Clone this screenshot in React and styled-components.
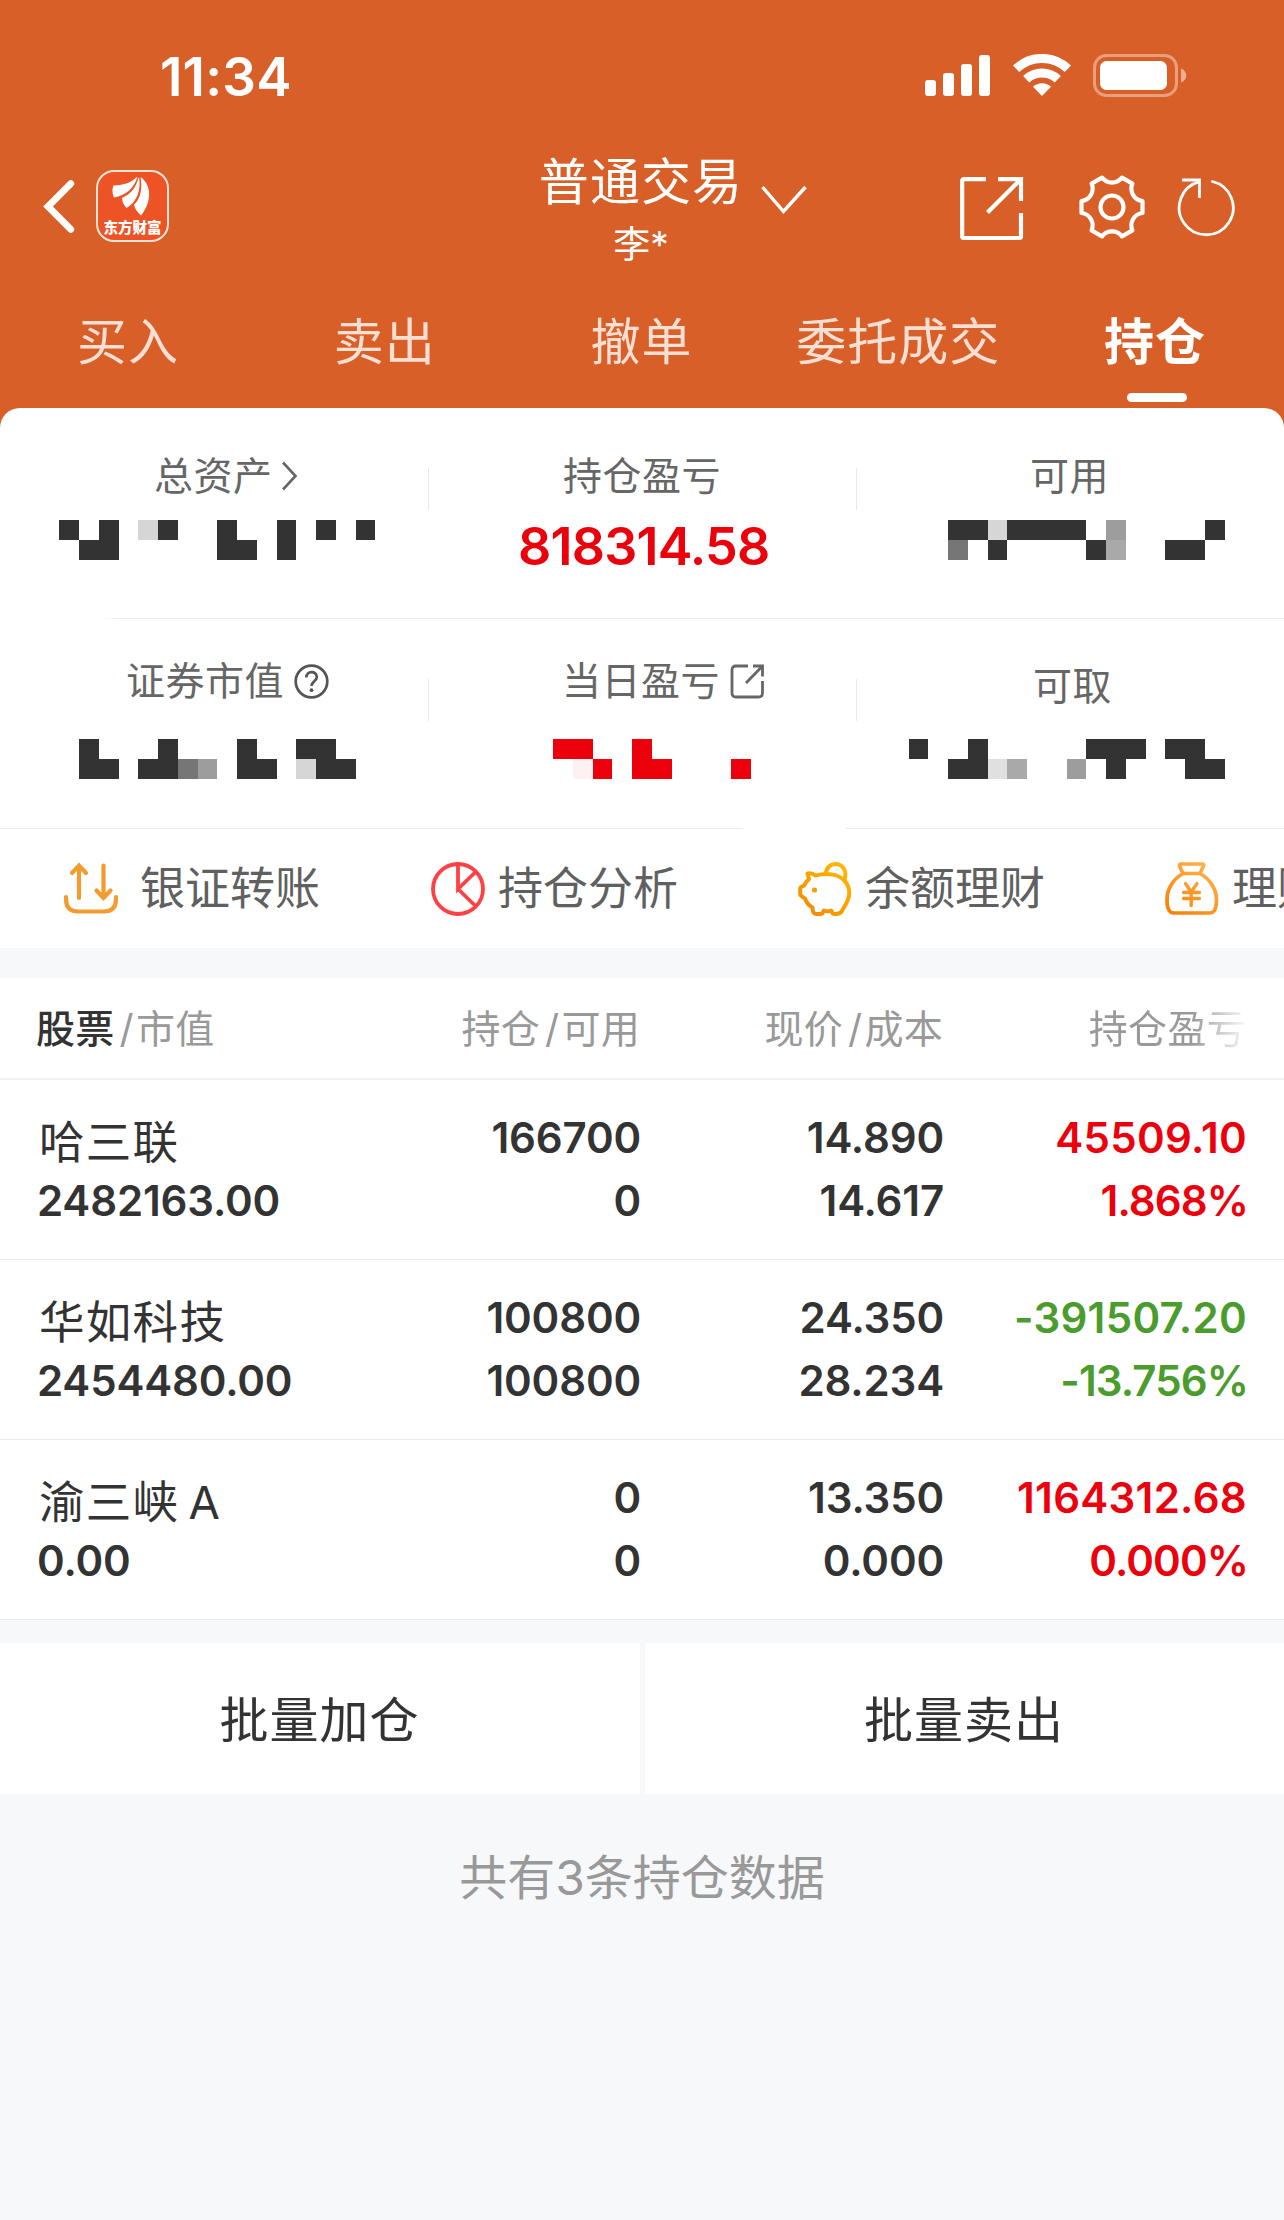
import styled, { createGlobalStyle, css } from "styled-components";

const GlobalStyle = createGlobalStyle`
  * {
    box-sizing: border-box;
  }

  body {
    margin: 0;
    background: #f7f8fa;
    font-family: Inter, "Noto Sans CJK SC", sans-serif;
    color: #333333;
  }
`;

const Screen = styled.div`
  width: 1284px;
  height: 2220px;
  overflow: hidden;
  background: #f7f8fa;
`;

/* header */

const Header = styled.header`
  height: 448px;
  background: #d85f27;
  color: #ffffff;
`;

const StatusBar = styled.div`
  display: flex;
  justify-content: space-between;
  height: 150px;
  padding: 54px 96px 0 160px;
`;

const Clock = styled.div`
  height: 46px;
  font-size: 53px;
  line-height: 46px;
  font-weight: 600;
  letter-spacing: 0.2px;
`;

const StatusIcons = styled.div`
  display: flex;
  align-items: flex-start;
  gap: 22px;
`;

const NavBar = styled.div`
  display: grid;
  grid-template-columns: 541px 1fr 324px;
  height: 140px;
`;

const NavLeft = styled.div`
  display: flex;
  align-items: flex-start;
  gap: 20px;
  padding: 20px 0 0 42px;
`;

const BackIcon = styled.svg`
  margin-top: 8px;
`;

const AppBadge = styled.div`
  display: flex;
  flex-direction: column;
  align-items: center;
  width: 73px;
  height: 72px;
  border: 2px solid #fbe3d8;
  border-radius: 18px;
  background: #ee5326;
`;

const AppBadgeName = styled.div`
  font-size: 14.5px;
  line-height: 14px;
  font-weight: 900;
  white-space: nowrap;
`;

const NavCenter = styled.div`
  display: flex;
  gap: 20px;
`;

const Account = styled.div`
  display: flex;
  flex-direction: column;
  align-items: center;
  width: 200px;
`;

const AccountType = styled.div`
  margin-top: 6px;
  font-size: 50px;
  line-height: 52px;
  letter-spacing: 1.1px;
  white-space: nowrap;
`;

const AccountName = styled.div`
  margin-top: 18px;
  font-size: 37px;
  line-height: 38px;
`;

const ChevronDown = styled.svg`
  margin-top: 34px;
`;

const NavRight = styled.div`
  display: flex;
  align-items: flex-start;
  padding-top: 24px;
`;

const SettingsIcon = styled.svg`
  margin-left: 52px;
`;

const RefreshIcon = styled.svg`
  margin-left: 31px;
`;

const Tabs = styled.nav`
  display: grid;
  grid-template-columns: repeat(5, 1fr);
`;

const Tab = styled.div`
  display: flex;
  flex-direction: column;
  align-items: center;
  font-size: 50px;
  line-height: 52px;
  letter-spacing: 1px;
  padding: 26px 1px 0 0;
  color: rgba(255, 255, 255, 0.8);
  white-space: nowrap;

  ${({ $active }) =>
    $active &&
    css`
      color: #ffffff;
      font-weight: 600;

      &::after {
        content: "";
        width: 60px;
        height: 9px;
        margin: 25px 0 0 3px;
        border-radius: 5px;
        background: #ffffff;
      }
    `}
`;

/* asset summary */

const Summary = styled.section`
  margin-top: -40px;
  height: 540px;
  border-radius: 20px 20px 0 0;
  background: #ffffff;
`;

const SummaryRow = styled.div`
  display: grid;
  grid-template-columns: repeat(3, 1fr);
  height: ${({ $height }) => $height}px;
`;

const SummaryCell = styled.div`
  position: relative;
  padding-top: ${({ $top }) => $top}px;

  &:not(:first-child)::before {
    content: "";
    position: absolute;
    left: 0;
    top: 60px;
    width: 1px;
    height: 42px;
    background: #e8e8e8;
  }
`;

const Label = styled.div`
  display: flex;
  align-items: center;
  height: 40px;
  padding-left: ${({ $left }) => $left}px;
  font-size: 39px;
  line-height: 40px;
  letter-spacing: 0.5px;
  color: #666666;
  white-space: nowrap;

  svg {
    margin-left: ${({ $gap }) => $gap || 10}px;
  }
`;

const ProfitTotal = styled.div`
  margin-top: 25px;
  padding-left: 90px;
  font-size: 52px;
  line-height: 52px;
  font-weight: 600;
  letter-spacing: -0.8px;
  color: #ec000c;
`;

const Mosaic = styled.div`
  display: grid;
  grid-template-columns: repeat(${({ $columns }) => $columns}, 19.754px);
  grid-auto-rows: 20px;
  margin: ${({ $top }) => $top}px 0 0 ${({ $left }) => $left}px;
`;

const Tile = styled.span`
  background: ${({ $color }) => $color};
`;

const Divider = styled.div`
  height: 1px;
  background: ${({ $fill }) => $fill || "#ebebeb"};
`;

const Shortcuts = styled.div`
  display: flex;
  height: 119px;
  overflow: hidden;
`;

const Shortcut = styled.div`
  display: flex;
  align-items: center;
  flex: 0 0 367px;
  gap: ${({ $gap }) => $gap || 13}px;
  padding-left: 64px;
  font-size: 45px;
  line-height: 50px;
  color: #606060;
  white-space: nowrap;
`;

/* positions table */

const Table = styled.section`
  margin-top: 30px;
  background: #ffffff;
`;

const HeadRow = styled.div`
  display: grid;
  grid-template-columns: 341px 263px 303px 303px;
  align-items: center;
  height: 102px;
  padding: 2px 0 0 36px;
  border-bottom: 2px solid #f1f1f1;
  font-size: 39px;
  line-height: 50px;
  color: #999999;
`;

const Head = styled.div`
  letter-spacing: 0.3px;
  text-align: ${({ $align }) => $align || "right"};
  white-space: nowrap;

  b {
    font-weight: 500;
    color: #333333;
  }

  i {
    margin: 0 2px 0 5px;
    font-style: normal;
  }
`;

const FadedHead = styled(Head)`
  background: linear-gradient(90deg, #999999 82%, #eeeeee 98%);
  background-clip: text;
  -webkit-background-clip: text;
  color: transparent;
`;

const Position = styled.div`
  display: grid;
  grid-template-columns: 341px 263px 303px 303px;
  grid-template-rows: 63px 63px;
  height: 180px;
  padding: 26px 0 0 37px;
  border-bottom: 1px solid #e9e9e9;
  font-size: 42px;
  line-height: 63px;
  font-weight: 600;
`;

const StockName = styled.div`
  padding: 5px 0 0 2px;
  font-size: 45.5px;
  font-weight: 400;
  letter-spacing: 1.3px;
  word-spacing: -5px;
  white-space: nowrap;
`;

const Amount = styled.div`
  text-align: ${({ $align }) => $align || "right"};
  letter-spacing: -0.15px;
  white-space: nowrap;
`;

const Profit = styled(Amount)`
  letter-spacing: 0.3px;
  color: ${({ $color }) => $color};
`;

const Rate = styled(Profit)`
  margin-right: -1px;
  letter-spacing: -0.9px;
`;

/* footer */

const BatchActions = styled.div`
  display: grid;
  grid-template-columns: 640px 639px;
  gap: 5px;
  margin-top: 23px;
`;

const BatchButton = styled.button`
  height: 151px;
  padding: 0 1px 4px 0;
  border: 0;
  background: #ffffff;
  font: inherit;
  font-size: 49px;
  letter-spacing: 1px;
  color: #333333;
`;

const CountNote = styled.p`
  margin: 58px 0 0;
  font-size: 48px;
  line-height: 52px;
  text-align: center;
  color: #999999;
`;

const RED = "#ec000c";
const GREEN = "#4a9c2d";

const SHADES = {
  ".": "transparent",
  "#": "#333333",
  r: RED,
  p: "#fdf1f4",
  q: "#e0e0e0",
  l: "#d6d6d6",
  o: "#a9a9a9",
  n: "#9d9d9d",
  m: "#767676",
};

const positions = [
  {
    name: "哈三联",
    value: "2482163.00",
    held: "166700",
    usable: "0",
    price: "14.890",
    cost: "14.617",
    profit: "45509.10",
    rate: "1.868%",
    color: RED,
  },
  {
    name: "华如科技",
    value: "2454480.00",
    held: "100800",
    usable: "100800",
    price: "24.350",
    cost: "28.234",
    profit: "-391507.20",
    rate: "-13.756%",
    color: GREEN,
  },
  {
    name: "渝三峡 A",
    value: "0.00",
    held: "0",
    usable: "0",
    price: "13.350",
    cost: "0.000",
    profit: "1164312.68",
    rate: "0.000%",
    color: RED,
  },
];

const HiddenValue = ({ rows, left, top }) => (
  <Mosaic $columns={rows[0].length} $left={left} $top={top}>
    {rows
      .join("")
      .split("")
      .map((shade, i) => (
        <Tile key={i} $color={SHADES[shade]} />
      ))}
  </Mosaic>
);

const PhoneStatus = () => (
  <StatusBar>
    <Clock>11:34</Clock>
    <StatusIcons>
      <svg width="66" height="43" viewBox="0 0 66 43" fill="#fff">
        <rect x="0" y="26" width="11" height="16" rx="3" />
        <rect x="18" y="19" width="11" height="23" rx="3" />
        <rect x="36" y="10" width="11" height="32" rx="3" />
        <rect x="54" y="1" width="11" height="41" rx="3" />
      </svg>
      <svg width="58" height="43" viewBox="0 0 58 43" fill="none" stroke="#fff" strokeWidth="9">
        <path d="M3.1 14.8A37.5 37.5 0 0 1 54.9 14.8" />
        <path d="M13.2 25.3A23 23 0 0 1 44.8 25.3" />
        <path d="M29 42L20 32.8A13 13 0 0 1 38 32.8Z" fill="#fff" stroke="none" />
      </svg>
      <svg width="95" height="43" viewBox="0 0 95 43">
        <rect x="1.5" y="1.5" width="82" height="40" rx="12" fill="none" stroke="#fff" strokeOpacity="0.4" strokeWidth="3" />
        <rect x="7" y="7" width="67" height="29" rx="6.5" fill="#fff" />
        <path d="M88 14.5C95 17 95 26 88 28.5Z" fill="#fff" fillOpacity="0.5" />
      </svg>
    </StatusIcons>
  </StatusBar>
);

const AppLogo = () => (
  <AppBadge>
    <svg width="69" height="49" viewBox="2 2 69 49" fill="#fff">
      <path d="M40.5 7C35 13.5 26 15 17.5 15.5C16 19 16 23 18 27.5C30 25.5 38 18 41.5 7Z" />
      <path d="M42.3 8C40.5 17 35 24 26 28C26 32 28 35 30.5 38C41 32 45 20 43.2 8Z" />
      <path d="M44.5 7C46.5 17 45 29 38 34.5C38.5 38 41 42 45 45.5C56 32 56 15 44.5 7Z" />
    </svg>
    <AppBadgeName>东方财富</AppBadgeName>
  </AppBadge>
);

const Nav = () => (
  <NavBar>
    <NavLeft>
      <BackIcon width="34" height="58" viewBox="0 0 34 58" fill="none" stroke="#fff" strokeWidth="6.8" strokeLinecap="round">
        <path d="M28.8 5.7L6 28.5L28.8 51.3" />
      </BackIcon>
      <AppLogo />
    </NavLeft>
    <NavCenter>
      <Account>
        <AccountType>普通交易</AccountType>
        <AccountName>李*</AccountName>
      </Account>
      <ChevronDown width="46" height="32" viewBox="0 0 46 32" fill="none" stroke="#fff" strokeWidth="3.4">
        <path d="M1.5 3L22.5 27.5L44.5 3" />
      </ChevronDown>
    </NavCenter>
    <NavRight>
      <svg width="66" height="68" viewBox="0 0 66 68" fill="none" stroke="#fff" strokeWidth="4.2">
        <path d="M26 5.2H4Q2.2 5.2 2.2 7V62.5Q2.2 64 4 64H59Q61 64 61 62.5V39" />
        <path d="M38 5.2H61V27" />
        <path d="M61 5L27.5 38.5" />
      </svg>
      <SettingsIcon width="68" height="68" viewBox="-34 -33 68 68" fill="none" stroke="#fff" strokeWidth="4.2" strokeLinejoin="round">
        <path d="M30.5 -6V6A12.5 12.5 0 0 0 20.4 23.4L10 29.4A12.5 12.5 0 0 0 -10 29.4L-20.4 23.4A12.5 12.5 0 0 0 -30.5 6V-6A12.5 12.5 0 0 0 -20.4 -23.4L-10 -29.4A12.5 12.5 0 0 0 10 -29.4L20.4 -23.4A12.5 12.5 0 0 0 30.5 -6Z" />
        <circle r="11.5" />
      </SettingsIcon>
      <RefreshIcon width="60" height="68" viewBox="0 0 60 68" fill="none" stroke="#fff" strokeWidth="2.8">
        <path d="M35.5 7.5A27 27 0 1 1 22.5 7.6" strokeLinecap="round" />
        <path d="M5 6H22.5V24" />
      </RefreshIcon>
    </NavRight>
  </NavBar>
);

const AssetSummary = () => (
  <Summary>
    <SummaryRow $height={210}>
      <SummaryCell $top={48}>
        <Label $left={154} $gap={8}>
          总资产
          <svg width="17" height="30" viewBox="0 0 17 30" fill="none" stroke="#666" strokeWidth="2.6">
            <path d="M2 1.5L14.5 15L2 28.5" />
          </svg>
        </Label>
        <HiddenValue left={59.26} top={24} rows={["#.#.l#..#..#.#.#", ".##.....##.#...."]} />
      </SummaryCell>
      <SummaryCell $top={48}>
        <Label $left={135}>持仓盈亏</Label>
        <ProfitTotal>818314.58</ProfitTotal>
      </SummaryCell>
      <SummaryCell $top={48}>
        <Label $left={174}>可用</Label>
        <HiddenValue left={92.2} top={24} rows={["##l####.n....#", "m.#....#o..##."]} />
      </SummaryCell>
    </SummaryRow>
    <Divider $fill="linear-gradient(90deg, transparent 102px, #ebebeb 120px)" />
    <SummaryRow $height={209}>
      <SummaryCell $top={42}>
        <Label $left={126}>
          证券市值
          <svg width="35" height="35" viewBox="0 0 35 35" fill="none" stroke="#555" strokeWidth="2.7">
            <circle cx="17.5" cy="17.5" r="15.8" />
            <path d="M12.3 13.5C12.3 6.5 22.8 6.5 22.8 13C22.8 17.2 17.5 17.3 17.5 22" />
            <circle cx="17.5" cy="26.2" r="1.9" fill="#555" stroke="none" />
          </svg>
        </Label>
        <HiddenValue left={79.01} top={38} rows={["#...#...#..##.", "##.##mn.##.l##"]} />
      </SummaryCell>
      <SummaryCell $top={42}>
        <Label $left={134} $gap={10}>
          当日盈亏
          <svg width="35" height="35" viewBox="0 0 35 35" fill="none" stroke="#666" strokeWidth="2.8">
            <path d="M18 2H6Q2 2 2 6V29Q2 33 6 33H28.5Q32.5 33 32.5 29V17" />
            <path d="M23 2H32.5V12.5" />
            <path d="M32 2.5L16 19" />
          </svg>
        </Label>
        <HiddenValue left={125.1} top={38} rows={["rr..r.....", ".pr.rr...r"]} />
      </SummaryCell>
      <SummaryCell $top={47}>
        <Label $left={177}>可取</Label>
        <HiddenValue left={52.7} top={33} rows={["#..#.....###.##.", "..##qo..n.#...##"]} />
      </SummaryCell>
    </SummaryRow>
    <Divider $fill="linear-gradient(90deg, #ebebeb 740px, transparent 746px 845px, #ebebeb 847px)" />
    <Shortcuts>
      <Shortcut $gap={22}>
        <svg width="54" height="54" viewBox="0 0 54 54" fill="none" stroke="#f29b2e" strokeWidth="4.2" strokeLinecap="round">
          <path d="M15 36V3.5M8 11L15 3.5L22 11" />
          <path d="M39.5 3.5V36M32.5 28.5L39.5 36L46.5 28.5" />
          <path d="M2 35V37Q2 49.5 14 49.5H40Q52 49.5 52 37V35" />
        </svg>
        银证转账
      </Shortcut>
      <Shortcut>
        <svg width="54" height="54" viewBox="0 0 54 54" fill="none" stroke="#ff4144" strokeWidth="3.8">
          <circle cx="27" cy="27" r="25" />
          <path d="M27 2V27L45 9.5M27 27L45 44.5" />
        </svg>
        持仓分析
      </Shortcut>
      <Shortcut>
        <svg width="54" height="54" viewBox="0 0 54 54" fill="none" stroke="url(#pig)" strokeWidth="4" strokeLinejoin="round">
          <defs>
            <linearGradient id="pig" gradientUnits="userSpaceOnUse" x1="44" y1="4" x2="10" y2="48">
              <stop offset="0" stopColor="#ffb700" />
              <stop offset="1" stopColor="#f58e00" />
            </linearGradient>
          </defs>
          <path d="M9.5 11.5C12.5 10.8 15.5 11.8 17.5 13.6C23 12 29 11.6 35 12.6C45 14.5 51.3 22 51.3 31C51.3 38 47 44 43.5 49.5C42 52.3 39 52 36.5 52C33.5 52 34.5 49.5 33 48.5C30.5 49.5 28 49.5 26 48.5C24.5 49.5 25.5 52 22.5 52H18.5C14 52 15 48.5 14.5 45.5C10 43 8 39.5 7 36.5C5.5 35 2.2 34.5 2.2 32V27C2.2 24 5 25 6.5 23C7.5 20.5 9 18.5 11 17.2Z" />
          <path d="M27.5 11.5C29 5 33 2 37.5 2C44.5 2 49.5 9 46.5 17.5" />
          <circle cx="16.5" cy="28" r="2.6" fill="#f9a000" stroke="none" />
        </svg>
        余额理财
      </Shortcut>
      <Shortcut>
        <svg width="54" height="54" viewBox="0 0 54 54" fill="none" stroke="url(#bag)" strokeWidth="3.7" strokeLinejoin="round" strokeLinecap="round">
          <defs>
            <linearGradient id="bag" gradientUnits="userSpaceOnUse" x1="40" y1="4" x2="8" y2="50">
              <stop offset="0" stopColor="#ffb04a" />
              <stop offset="1" stopColor="#fa8208" />
            </linearGradient>
          </defs>
          <path d="M16 2H37.5Q39.5 2 38.5 4L35 11.5H18L14.5 4Q14 2 16 2Z" />
          <path d="M18 11.5C8 17 2 27 2 38C2 44 3 48 5.5 50Q6.5 51 9 51H44.5Q47 51 48.5 49.5C51 47 51.5 43 51.5 38C51.5 27 45 17 35 11.5" />
          <path d="M20.5 21.5L26.2 30L32 21.5M26.2 30V43.5M18.5 30.5H34.5M18.5 36.5H34.5" strokeWidth="3.3" />
        </svg>
        理财
      </Shortcut>
    </Shortcuts>
  </Summary>
);

const PositionTable = () => (
  <Table>
    <HeadRow>
      <Head $align="left">
        <b>股票</b>
        <i>/</i>市值
      </Head>
      <Head>
        持仓<i>/</i>可用
      </Head>
      <Head>
        现价<i>/</i>成本
      </Head>
      <FadedHead>持仓盈亏</FadedHead>
    </HeadRow>
    {positions.map((p) => (
      <Position key={p.name}>
        <StockName>{p.name}</StockName>
        <Amount>{p.held}</Amount>
        <Amount>{p.price}</Amount>
        <Profit $color={p.color}>{p.profit}</Profit>
        <Amount $align="left">{p.value}</Amount>
        <Amount>{p.usable}</Amount>
        <Amount>{p.cost}</Amount>
        <Rate $color={p.color}>{p.rate}</Rate>
      </Position>
    ))}
  </Table>
);

const App = () => {
  return (
    <>
      <GlobalStyle />
      <Screen>
        <Header>
          <PhoneStatus />
          <Nav />
          <Tabs>
            <Tab>买入</Tab>
            <Tab>卖出</Tab>
            <Tab>撤单</Tab>
            <Tab>委托成交</Tab>
            <Tab $active>持仓</Tab>
          </Tabs>
        </Header>
        <AssetSummary />
        <PositionTable />
        <BatchActions>
          <BatchButton>批量加仓</BatchButton>
          <BatchButton>批量卖出</BatchButton>
        </BatchActions>
        <CountNote>共有3条持仓数据</CountNote>
      </Screen>
    </>
  );
};

export default App;
